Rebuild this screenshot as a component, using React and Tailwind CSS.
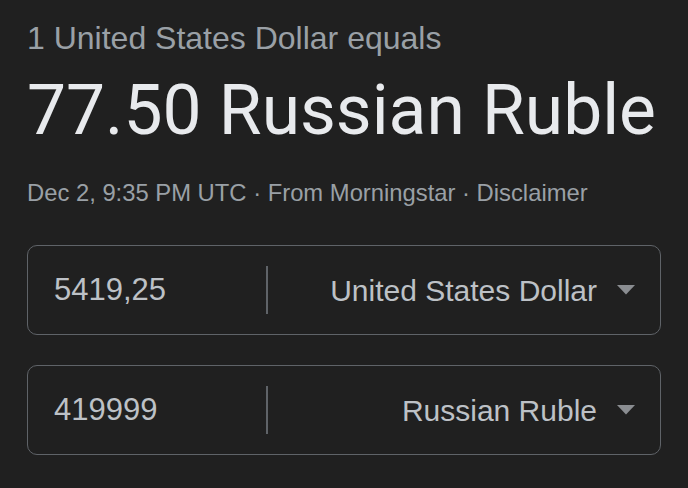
export default function App() {
  const sans = { fontFamily: '"Liberation Sans", Arial, sans-serif' };
  const Box = ({ value, label }) => (
    <div className="flex h-[90px] items-center rounded-[10px] border-[1.5px] border-[#5f6368]">
      <div className="w-[238px] pl-[26px] text-[31px] text-[#bdc1c6]">{value}</div>
      <div className="h-[48px] w-[2px] bg-[#5f6368]" />
      <div className="flex flex-1 items-center justify-end pr-[24px]">
        <span className="text-[30px] text-[#bdc1c6]">{label}</span>
        <svg width="20" height="10" viewBox="0 0 20 10" className="ml-[19px]">
          <path d="M1 0 L19 0 L10 9.5 Z" fill="#8a8d91" />
        </svg>
      </div>
    </div>
  );
  return (
    <div className="h-[488px] w-[688px] overflow-hidden bg-[#202020] px-[27px] pt-[20px]" style={sans}>
      <div className="text-[32px] leading-[36px] text-[#9aa0a6]">1 United States Dollar equals</div>
      <div
        className="mt-[15px] text-[69.5px] leading-[80px] text-[#e8eaed]"
        style={{ fontFamily: 'Roboto, "Open Sans", sans-serif' }}
      >
        77.50 Russian Ruble
      </div>
      <div className="mt-[28px] text-[23.8px] leading-[28px] text-[#9aa0a6]">
        Dec 2, 9:35 PM UTC · From Morningstar · Disclaimer
      </div>
      <div className="mt-[38px] flex flex-col gap-[30px]">
        <Box value="5419,25" label="United States Dollar" />
        <Box value="419999" label="Russian Ruble" />
      </div>
    </div>
  );
}
